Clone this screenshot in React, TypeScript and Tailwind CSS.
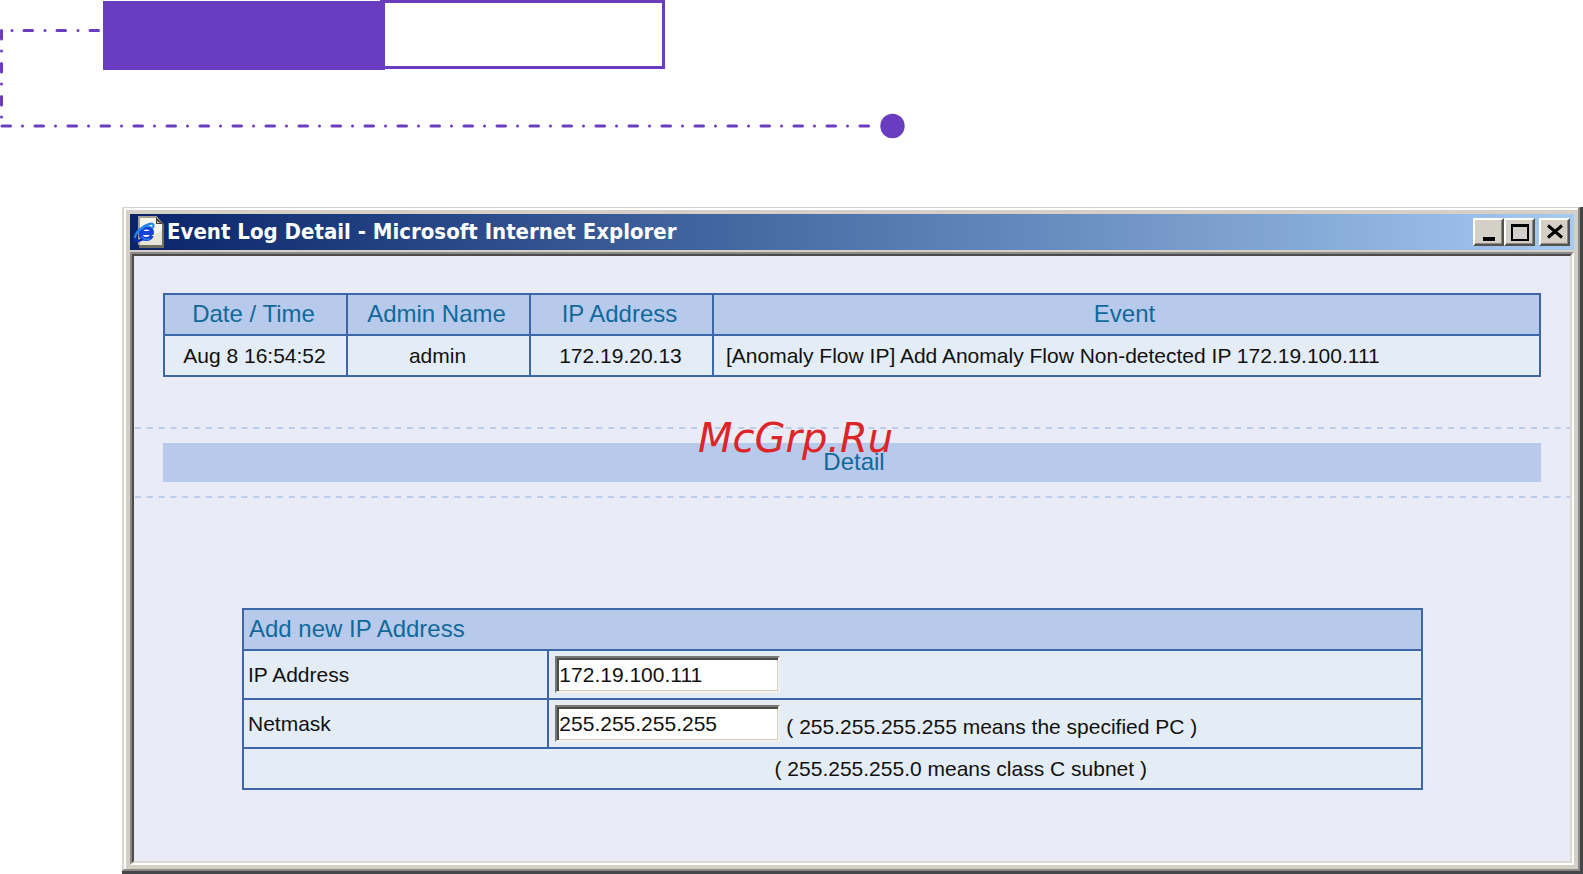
import type { ReactNode } from "react";

const events = [
  {
    time: "Aug 8 16:54:52",
    admin: "admin",
    ip: "172.19.20.13",
    event: "[Anomaly Flow IP] Add Anomaly Flow Non-detected IP 172.19.100.111",
  },
];

function PageBanner() {
  return (
    <header className="relative h-[207px] shrink-0">
      <svg
        className="absolute left-0 top-0"
        width="920"
        height="150"
        fill="none"
        stroke="#6a3cc0"
        strokeWidth="3"
        strokeLinecap="round"
        strokeDasharray="8.500 12 0.010 12.490"
        aria-hidden="true"
      >
        <path d="M98.500 30.500H2" />
        <path d="M1.500 30.500V120" />
        <path d="M2 126H880" />
        <circle cx="892.5" cy="126" r="12.2" fill="#6a3cc0" stroke="none" />
      </svg>
      <div className="relative flex pl-[103px]">
        <div className="mt-px h-[69px] w-[282px] bg-[#6a3cc0]" />
        <div className="-ml-[5px] h-[69px] w-[270px] border-3 border-l-5 border-[#6a3cc0] sm:w-[285px]" />
      </div>
    </header>
  );
}

function PageIcon() {
  return (
    <svg width="32" height="32" viewBox="0 0 32 32" className="-ml-px" aria-hidden="true">
      <path d="M6 1h18l7 7v24H6z" fill="#6f6c62" />
      <path d="M6 1h18l5 6v22H6z" fill="#f6f5ee" />
      <path d="M5 0h19v2H7v27H5z" fill="#a5a291" />
      <path d="M7 29V24l14-4 8-6v15z" fill="#dedbc4" opacity=".6" />
      <path d="M23 1v7h7z" fill="#3e3d38" />
      <path d="M24 5v2h3z" fill="#d8d6cc" />
      <path
        d="M19 19.500c-1.500 2.500-4 3.800-6.500 3.500-3.500-.4-5.300-3-4.800-6.200.6-3.400 3.600-5.800 6.800-5.300 3.200.5 4.800 3 4.300 5.500H9"
        fill="none"
        stroke="#1442d6"
        strokeWidth="4"
      />
      <path d="M9 13c2-3 6-4 9-2" fill="none" stroke="#2fa2f5" strokeWidth="1.500" />
      <path d="M9 21c1.500 2.500 5 3.500 8 1.500" fill="none" stroke="#2f7df0" strokeWidth="1.500" />
      <path
        d="M4 25c-4-1-2-8 4-12.500C13 8.500 20 6 20.500 9c.2 1-.2 2-.7 3"
        fill="none"
        stroke="#2484ee"
        strokeWidth="2.200"
      />
      <path d="M2 22c0 4 4 3.500 8 1" fill="none" stroke="#0a2cae" strokeWidth="2.500" />
    </svg>
  );
}

function CaptionButton({ label, children }: { label: string; children: ReactNode }) {
  return (
    <button
      type="button"
      aria-label={label}
      className="flex h-7 w-[31px] items-center justify-center border-2 border-t-white border-l-white border-r-[#55534f] border-b-[#55534f] bg-[#d4d0c8] shadow-[inset_-1px_-1px_0_#8c8982]"
    >
      <svg width="24" height="22" viewBox="0 0 24 22" fill="none" stroke="#000" aria-hidden="true">
        {children}
      </svg>
    </button>
  );
}

function TitleBar() {
  return (
    <div className="flex h-9 items-center bg-linear-to-r from-[#0a246a] to-[#a6caf0] px-1">
      <PageIcon />
      <h1 className="flex-1 pl-[2px] font-['DejaVu_Sans_Condensed','DejaVu_Sans',sans-serif] text-[22px] leading-7 font-bold whitespace-nowrap text-white">
        Event Log Detail - Microsoft Internet Explorer
      </h1>
      <CaptionButton label="Minimize">
        <path d="M6 18h12" strokeWidth="4" />
      </CaptionButton>
      <CaptionButton label="Maximize">
        <path d="M3 4.500h18" strokeWidth="3" />
        <path d="M4 4v15h16V4" strokeWidth="2" />
      </CaptionButton>
      <div className="w-1" />
      <CaptionButton label="Close">
        <path d="M5 4.500l14 12M19 4.500L5 16.500" strokeWidth="3" />
      </CaptionButton>
    </div>
  );
}

function DashedRule() {
  return (
    <svg className="block h-[2px] w-full" aria-hidden="true">
      <path d="M1 1H4000" stroke="#bccdec" strokeWidth="2" strokeDasharray="6 5.830" />
    </svg>
  );
}

function EventTable() {
  const head = "border-2 border-[#3d66a8] bg-[#b8caeb] pr-1 pb-[2px] text-2xl font-normal text-[#11699b]";
  const cell = "border-2 border-[#3d66a8] bg-[#e4ecf5] pr-[2px] text-center text-[21px]";
  return (
    <table className="w-full table-fixed border-collapse leading-7">
      <colgroup>
        <col className="w-[13.3%]" />
        <col className="w-[13.3%]" />
        <col className="w-[13.3%]" />
        <col />
      </colgroup>
      <thead>
        <tr className="h-[41px]">
          <th className={head}>Date / Time</th>
          <th className={head}>Admin Name</th>
          <th className={head}>IP Address</th>
          <th className={head}>Event</th>
        </tr>
      </thead>
      <tbody>
        {events.map((row) => (
          <tr key={row.time} className="h-[41px]">
            <td className={cell}>{row.time}</td>
            <td className={cell}>{row.admin}</td>
            <td className={cell}>{row.ip}</td>
            <td className="border-2 border-[#3d66a8] bg-[#e4ecf5] pl-3 text-[21px]">{row.event}</td>
          </tr>
        ))}
      </tbody>
    </table>
  );
}

function AddressForm() {
  const cell = "border-2 border-[#3d66a8] bg-[#e4ecf5] px-1 text-[21px]";
  const input =
    "h-[37px] w-[225px] border-2 border-t-[#7a7874] border-l-[#7a7874] border-r-[#f4f1ea] border-b-[#f4f1ea] bg-white pl-[2px] text-[21px] leading-7 shadow-[inset_2px_2px_0_#4c4b49,inset_-1px_-1px_0_#d4d0c8] outline-none";
  return (
    <table className="w-full table-fixed border-collapse leading-7">
      <colgroup>
        <col className="w-[25.9%]" />
        <col />
      </colgroup>
      <thead>
        <tr className="h-[41px]">
          <th
            colSpan={2}
            className="border-2 border-[#3d66a8] bg-[#b8caeb] px-[5px] pb-[2px] text-left text-2xl font-normal text-[#11699b]"
          >
            Add new IP Address
          </th>
        </tr>
      </thead>
      <tbody>
        <tr className="h-[49px]">
          <td className={cell}>
            <label htmlFor="ip">IP Address</label>
          </td>
          <td className={cell}>
            <div className="flex items-center pl-[2px]">
              <input id="ip" type="text" defaultValue="172.19.100.111" className={input} />
            </div>
          </td>
        </tr>
        <tr className="h-[49px]">
          <td className={cell}>
            <label htmlFor="netmask">Netmask</label>
          </td>
          <td className={cell}>
            <div className="flex items-center gap-[6px] pl-[2px]">
              <input id="netmask" type="text" defaultValue="255.255.255.255" className={input} />
              <span className="pt-[6px]">( 255.255.255.255 means the specified PC )</span>
            </div>
          </td>
        </tr>
        <tr className="h-[41px]">
          <td colSpan={2} className="border-2 border-[#3d66a8] bg-[#e4ecf5] pl-[45%] text-[21px]">
            ( 255.255.255.0 means class C subnet )
          </td>
        </tr>
      </tbody>
    </table>
  );
}

export default function App() {
  return (
    <div className="flex min-h-screen flex-col bg-white font-['Liberation_Sans',Arial,sans-serif] text-[#111]">
      <PageBanner />
      <div className="ml-[122px] flex flex-1 flex-col border-r-3 border-b-3 border-[#444546]">
        <div className="flex flex-1 flex-col border-t border-r-2 border-b-2 border-l-2 border-t-[#d4d0c8] border-r-[#8b8a86] border-b-[#8b8a86] border-l-[#d9d6cc]">
          <div className="flex flex-1 flex-col border-t-2 border-l-2 border-white bg-[#d4d0c8] pt-[4px] pl-[4px]">
            <div className="mr-1">
              <TitleBar />
            </div>
            <main className="mt-[2px] mr-1 mb-1 flex flex-1 flex-col border-2 border-t-[#8b8a86] border-l-[#8b8a86] border-r-white border-b-white">
              <div className="flex-1 border-2 border-t-[#4b4b4b] border-l-[#4b4b4b] border-r-[#dcd9d1] border-b-[#dcd9d1] bg-[#e9ecf6]">
                <section className="pt-[37px] pr-[29px] pl-[29px]">
                  <EventTable />
                </section>
                <section className="relative mt-[50px]">
                  <DashedRule />
                  <h2 className="mx-[29px] my-[14px] h-[39px] bg-[#b8caeb] pl-1 text-center text-2xl leading-[38px] text-[#11699b]">
                    Detail
                  </h2>
                  <DashedRule />
                  <p className="absolute -top-[13px] left-[564px] font-['DejaVu_Sans',sans-serif] text-[40px] leading-[48px] text-[#dd2528] italic">
                    McGrp.Ru
                  </p>
                </section>
                <section className="mt-[110px] mr-[147px] ml-[108px]">
                  <AddressForm />
                </section>
              </div>
            </main>
          </div>
        </div>
      </div>
    </div>
  );
}
